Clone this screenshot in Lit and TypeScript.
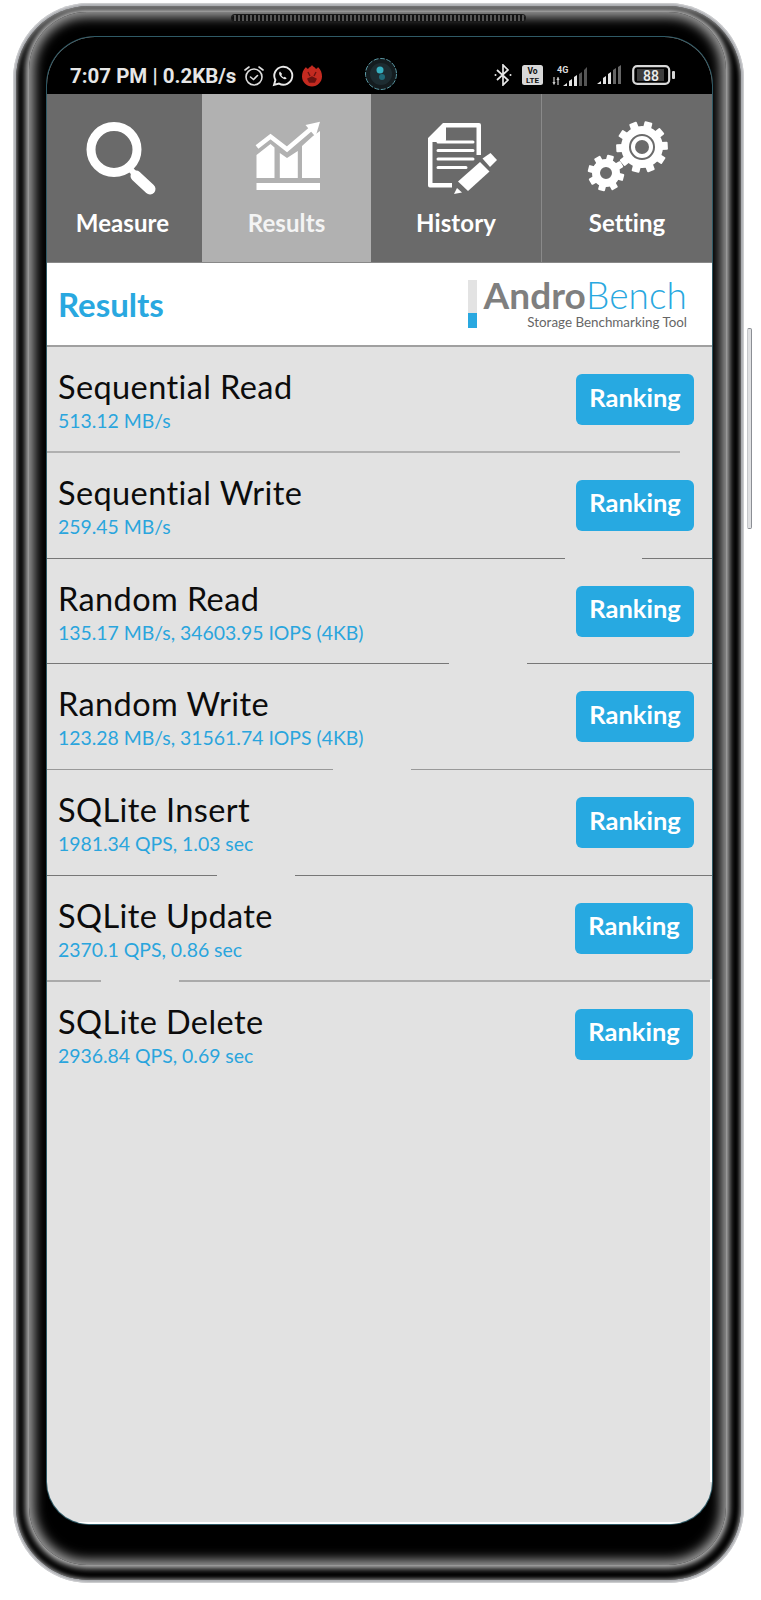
import { LitElement, html, css, svg } from "lit";
import { customElement } from "lit/decorators.js";

const rows = [
  { t: "Sequential Read", v: "513.12 MB/s", left: 633, right: 0, color: "#b0b0b0", h: 2 },
  { t: "Sequential Write", v: "259.45 MB/s", left: 518, right: 70, color: "#777", h: 1 },
  { t: "Random Read", v: "135.17 MB/s, 34603.95 IOPS (4KB)", left: 402, right: 185, color: "#777", h: 1 },
  { t: "Random Write", v: "123.28 MB/s, 31561.74 IOPS (4KB)", left: 286, right: 301, color: "#999", h: 1 },
  { t: "SQLite Insert", v: "1981.34 QPS, 1.03 sec", left: 170, right: 417, color: "#777", h: 1 },
  { t: "SQLite Update", v: "2370.1 QPS, 0.86 sec", left: 54, right: 533, color: "#aaa", h: 2 },
  { t: "SQLite Delete", v: "2936.84 QPS, 0.69 sec", left: 0, right: 0, color: "", h: 0 },
];

const gear = (cx: number, cy: number, r: number, tooth: number, hole: number, n: number) => {
  const teeth = [];
  for (let i = 0; i < n; i++) {
    teeth.push(svg`<rect x=${cx - tooth / 2} y=${cy - r - tooth * 0.6} width=${tooth} height=${tooth} rx="1" transform="rotate(${(360 / n) * i + 15} ${cx} ${cy})"></rect>`);
  }
  return svg`${teeth}<path fill-rule="evenodd" d="M${cx - r} ${cy}a${r} ${r} 0 1 0 ${2 * r} 0a${r} ${r} 0 1 0 ${-2 * r} 0zM${cx - hole} ${cy}a${hole} ${hole} 0 1 1 ${2 * hole} 0a${hole} ${hole} 0 1 1 ${-2 * hole} 0z"></path>`;
};

@customElement("app-root")
export class AppRoot extends LitElement {
  static styles = css`
    :host { display: block; width: 761px; height: 1600px; background: #fff; overflow: hidden; font-family: "Lato", "Noto Sans", sans-serif; }
    .stage { padding: 3px 0 0 13px; }
    .phone { position: relative; box-sizing: border-box; width: 731px; height: 1580px; border-radius: 76px; background: #a9abaf; padding: 3px; box-shadow: inset 0 0 2px 1px #d8d8da; }
    .button { position: absolute; left: 734px; top: 325px; width: 3px; height: 199px; border: 1px solid #8b8e94; border-left-color: #c5c7ca; border-radius: 2px; background: #dfe0e2; }
    .shell { box-sizing: border-box; height: 100%; border-radius: 73px; background: #000; padding: 6px 15px 15px 13px; box-shadow: inset 0 0 4px 1px #9a9a9a; }
    .ring { position: relative; box-sizing: border-box; height: 100%; border-radius: 58px; background: #000; padding: 25px 14px 41px 18px; box-shadow: 0 0 6px 3px #c4c4c4, inset 0 0 12px 5px #a2a2a2; }
    .speaker { position: absolute; left: 203px; top: 3px; width: 293px; height: 6px; border-radius: 3px; background: repeating-linear-gradient(90deg, #111 0 2px, #555 2px 4px); box-shadow: 0 0 0 1px #1a1a1a; }
    .screen { position: relative; height: 100%; border-radius: 48px 48px 42px 42px; overflow: hidden; display: flex; flex-direction: column; background: #e2e2e2; box-shadow: 0 0 0 1px #2f5a66; }
    .status { flex: 0 0 57px; background: #000; display: flex; align-items: center; padding: 0 36px 0 23px; color: #e6e6e6; position: relative; }
    .time { font: 700 20.5px "Roboto", sans-serif; white-space: nowrap; }
    .s-left { display: flex; align-items: center; gap: 7px; flex: 0 0 auto; padding-top: 20px; }
    .s-right { margin-left: auto; display: flex; align-items: center; gap: 10px; padding-top: 18px; }
    .m1 { margin-left: -1px; }
    .m4 { margin-left: -4px; }
    .camera { position: absolute; left: 318px; top: 21px; width: 32px; height: 32px; }
    .tabs { flex: 0 0 169px; display: grid; grid-template-columns: 155px 169px 170px 171px; border-bottom: 1px solid #888; box-sizing: border-box; }
    .tab { background: #6a6a6a; color: #fff; display: flex; flex-direction: column; align-items: center; font-weight: 700; font-size: 24px; }
    .tab.first { padding-right: 4px; }
    .tab.active { background: #b1b1b1; color: #f4f4f4; }
    .tab.div { border-left: 1px solid #8a8a8a; }
    .tab svg { margin-top: 24px; height: 80px; width: 100px; fill: #fff; display: block; }
    .tab span { margin-top: 10px; line-height: 30px; letter-spacing: .1px; }
    .head { flex: 0 0 84px; box-sizing: border-box; background: #fff; border-bottom: 2px solid #a0a0a0; display: flex; align-items: center; justify-content: space-between; padding: 0 25px 0 11px; }
    .head h1 { margin: 0; font-size: 33px; font-weight: 700; color: #29a8e0; }
    .logo { display: flex; gap: 6px; padding-top: 1px; }
    .bar { width: 9px; height: 48px; background: linear-gradient(#e3e3e3 0 33px, #29a8e0 33px); }
    .logo-t { display: flex; flex-direction: column; align-items: flex-end; }
    .brand { font-size: 37px; line-height: 30px; color: #29a8e0; font-weight: 300; white-space: nowrap; letter-spacing: .1px; }
    .brand b { color: #7f7f7f; font-weight: 700; }
    .tag { font-size: 13.4px; line-height: 16px; color: #666; margin-top: 4px; white-space: nowrap; }
    .list { flex: 1; position: relative; border-bottom: 2px solid #fff; }
    .list::after { content: ""; position: absolute; right: 0; top: 632px; bottom: 40px; width: 2px; background: #fff; }
    .item { height: 105.75px; display: flex; flex-direction: column; }
    .row { flex: 1; display: flex; align-items: flex-start; justify-content: space-between; padding: 0 18px 0 11px; box-sizing: border-box; }
    .row.shift { padding-right: 19px; }
    .title { font-size: 32.5px; line-height: 40px; margin-top: 20px; color: #0c0c0c; white-space: nowrap; letter-spacing: .4px; }
    .val { font-size: 19.4px; line-height: 24px; color: #2aa5dd; margin-top: 2px; white-space: nowrap; }
    .rank { margin-top: 27px; width: 118px; height: 51px; border-radius: 6px; background: #27a9e1; color: #fff; font-weight: 700; font-size: 25.5px; display: flex; align-items: center; justify-content: center; padding-bottom: 6px; box-sizing: border-box; }
    .rule { display: flex; justify-content: space-between; flex: none; }
    .seg { height: 100%; }
  `;

  render() {
    return html`<div class="stage"><div class="phone">
      <div class="button"></div>
      <div class="shell"><div class="ring">
        <div class="speaker"></div>
        <div class="screen">
          <div class="status">
            <div class="s-left">
              <span class="time">7:07 PM | 0.2KB/s</span>
              <svg width="22" height="22" viewBox="0 0 22 22" fill="none" stroke="#ddd" stroke-width="1.6"><circle cx="11" cy="12" r="8"></circle><path d="M7.5 12l3 2.5 4-4M2 5l4-3M20 5l-4-3" stroke-linecap="round"></path></svg>
              <svg width="22" height="22" viewBox="0 0 22 22" fill="none"><path d="M2 20l1.4-5A9 9 0 1 1 7 18.6z" stroke="#e8e8e8" stroke-width="1.9"></path><path d="M8 6.5c-1.6 1 -1 3.500 1 5.500s4.500 3 5.700 1.200l-2-1.500-1 .8c-1-.5-2-1.500-2.400-2.500l.8-1z" fill="#e8e8e8"></path></svg>
              <svg width="22" height="24" viewBox="0 0 22 24"><path d="M11 1c1 2 3 2 4 4 1-.5 1.500-1 2-2 3 3 4 6 4 9.500 0 5.500-4.500 10-10 10S1 18 1 12.500C1 9 2 6 5 3c.5 1 1 1.500 2 2 1-2 3-2 4-4z" fill="#c42a20"></path><path d="M7 15l4-2 4 2-1.500 3h-5zM7 8l2 4M15 8l-2 4" fill="#6a1210" stroke="#6a1210" stroke-width="1.400"></path></svg>
            </div>
            <svg class="camera" viewBox="0 0 32 32"><circle cx="16" cy="16" r="15.500" fill="#141c1f" stroke="#5a98a4" stroke-width="1" stroke-dasharray="5 1.500"></circle><circle cx="16" cy="16" r="11" fill="#1d2c31"></circle><circle cx="15" cy="12" r="3.500" fill="#36b0c0"></circle><circle cx="17" cy="19" r="3" fill="#1f6a78"></circle></svg>
            <div class="s-right">
              <svg width="18" height="22" viewBox="0 0 18 22" fill="none" stroke="#e6e6e6" stroke-width="1.700"><path d="M3 6l11 10-5 5V1l5 5L3 16"></path><circle cx="1.500" cy="11" r="1" fill="#e6e6e6" stroke="none"></circle><circle cx="16.500" cy="11" r="1" fill="#e6e6e6" stroke="none"></circle></svg>
              <svg width="21" height="20" viewBox="0 0 21 20"><rect width="21" height="20" rx="2.500" fill="#d8d8d8"></rect><text x="10.500" y="9" font-size="8.500" font-weight="700" font-family="Roboto" text-anchor="middle" fill="#111">Vo</text><text x="10.500" y="17.500" font-size="8" font-weight="700" font-family="Roboto" text-anchor="middle" fill="#111">LTE</text></svg>
              <svg class="m1" width="38" height="24" viewBox="0 0 38 24"><text x="5" y="10" font-size="9" font-weight="700" font-family="Roboto" fill="#ddd">4G</text><path d="M2 14v8M1 19l1 2 1-2M6 22v-8M5 17l1-2 1 2" stroke="#ccc" stroke-width="1.200" fill="none"></path><path d="M11 23l4-3v3zM17 23v-5l3-2v7zM22 23v-9l3-2v11z" fill="#e4e4e4"></path><path d="M27 23V11l3-2v14zM32 23V7l3-3v19z" fill="#555"></path></svg>
              <svg class="m4" width="26" height="21" viewBox="0 0 26 21"><path d="M1 20l4-3v3zM7 20v-6l3-2v8zM12 20V10l3-2v12z" fill="#e4e4e4"></path><path d="M17 20V6l3-2v16zM22 20V3l3-2v19z" fill="#666"></path></svg>
              <svg width="44" height="20" viewBox="0 0 44 20"><rect x="1.200" y="1.200" width="36" height="17.600" rx="4" fill="none" stroke="#d8d8d8" stroke-width="2.200"></rect><rect x="5" y="4" width="27" height="12" fill="#3c3c3c"></rect><text x="19" y="15.500" font-size="14" font-weight="500" font-family="Roboto" text-anchor="middle" fill="#eee">88</text><rect x="40" y="6" width="3" height="8" rx="1" fill="#d8d8d8"></rect></svg>
            </div>
          </div>
          <div class="tabs">
            <div class="tab first">
              <svg viewBox="0 0 100 80"><circle cx="41" cy="31.500" r="23" fill="none" stroke="#fff" stroke-width="9"></circle><path d="M56 50l7 7" stroke="#fff" stroke-width="6"></path><path d="M63 58l14 13" stroke="#fff" stroke-width="11" stroke-linecap="round"></path></svg>
              <span>Measure</span>
            </div>
            <div class="tab active">
              <svg viewBox="0 0 100 80"><path d="M19.500 60V37l14-11 4 3.500V60zM42.800 60V35l7.200 5 10.800-7V60zM65 60V28l11-10 7-5v47zM19.500 65H83v7H19.500z"></path><path d="M20 29l13.500-10.500L50 31.300 75 10" fill="none" stroke="#fff" stroke-width="4.500"></path><path d="M68.500 7L83 3.700l-4.500 15z"></path></svg>
              <span>Results</span>
            </div>
            <div class="tab">
              <svg viewBox="0 0 100 80"><path fill-rule="evenodd" d="M37 5h36a2 2 0 0 1 2 2v30h-4.500V9.500H40V22a2 2 0 0 1-2 2H26.500v41H46v4.500H24a2 2 0 0 1-2-2V20z"></path><path d="M32 22.500h35a1.500 1.500 0 0 1 0 3H32a1.500 1.500 0 0 1 0-3zM32 31h35a1.500 1.500 0 0 1 0 3H32a1.500 1.500 0 0 1 0-3zM32 39.500h35a1.500 1.500 0 0 1 0 3H32a1.500 1.500 0 0 1 0-3zM32 48h28a1.500 1.500 0 0 1 0 3H32a1.500 1.500 0 0 1 0-3z"></path><path d="M74 44l9.500 9.500L62 73l-10-9.500z" stroke="#6a6a6a" stroke-width="2" paint-order="stroke"></path><path d="M76.500 40.500l8-5.500 6.500 7-7 7z"></path><path d="M51 70l5 4.500-8 1.500z"></path></svg>
              <span>History</span>
            </div>
            <div class="tab div">
              <svg viewBox="0 0 100 80">${gear(65, 29, 21, 8, 13, 10)}<circle cx="65" cy="29" r="11"></circle><circle cx="65" cy="29" r="7" fill="#6a6a6a"></circle>${gear(29, 55, 14, 7, 6, 8)}</svg>
              <span>Setting</span>
            </div>
          </div>
          <div class="head">
            <h1>Results</h1>
            <div class="logo">
              <div class="bar"></div>
              <div class="logo-t">
                <div class="brand"><b>Andro</b>Bench</div>
                <div class="tag">Storage Benchmarking Tool</div>
              </div>
            </div>
          </div>
          <div class="list">
            ${rows.map((r, i) => html`
              <div class="item">
                <div class="row ${i >= 5 ? "shift" : ""}">
                  <div>
                    <div class="title">${r.t}</div>
                    <div class="val">${r.v}</div>
                  </div>
                  <div class="rank">Ranking</div>
                </div>
                ${r.h ? html`<div class="rule" style="height:${r.h}px">
                  <div class="seg" style="width:${r.left}px;background:${r.color}"></div>
                  <div class="seg" style="width:${r.right}px;background:${r.color}"></div>
                </div>` : ""}
              </div>
            `)}
          </div>
        </div>
      </div></div>
    </div></div>`;
  }
}
